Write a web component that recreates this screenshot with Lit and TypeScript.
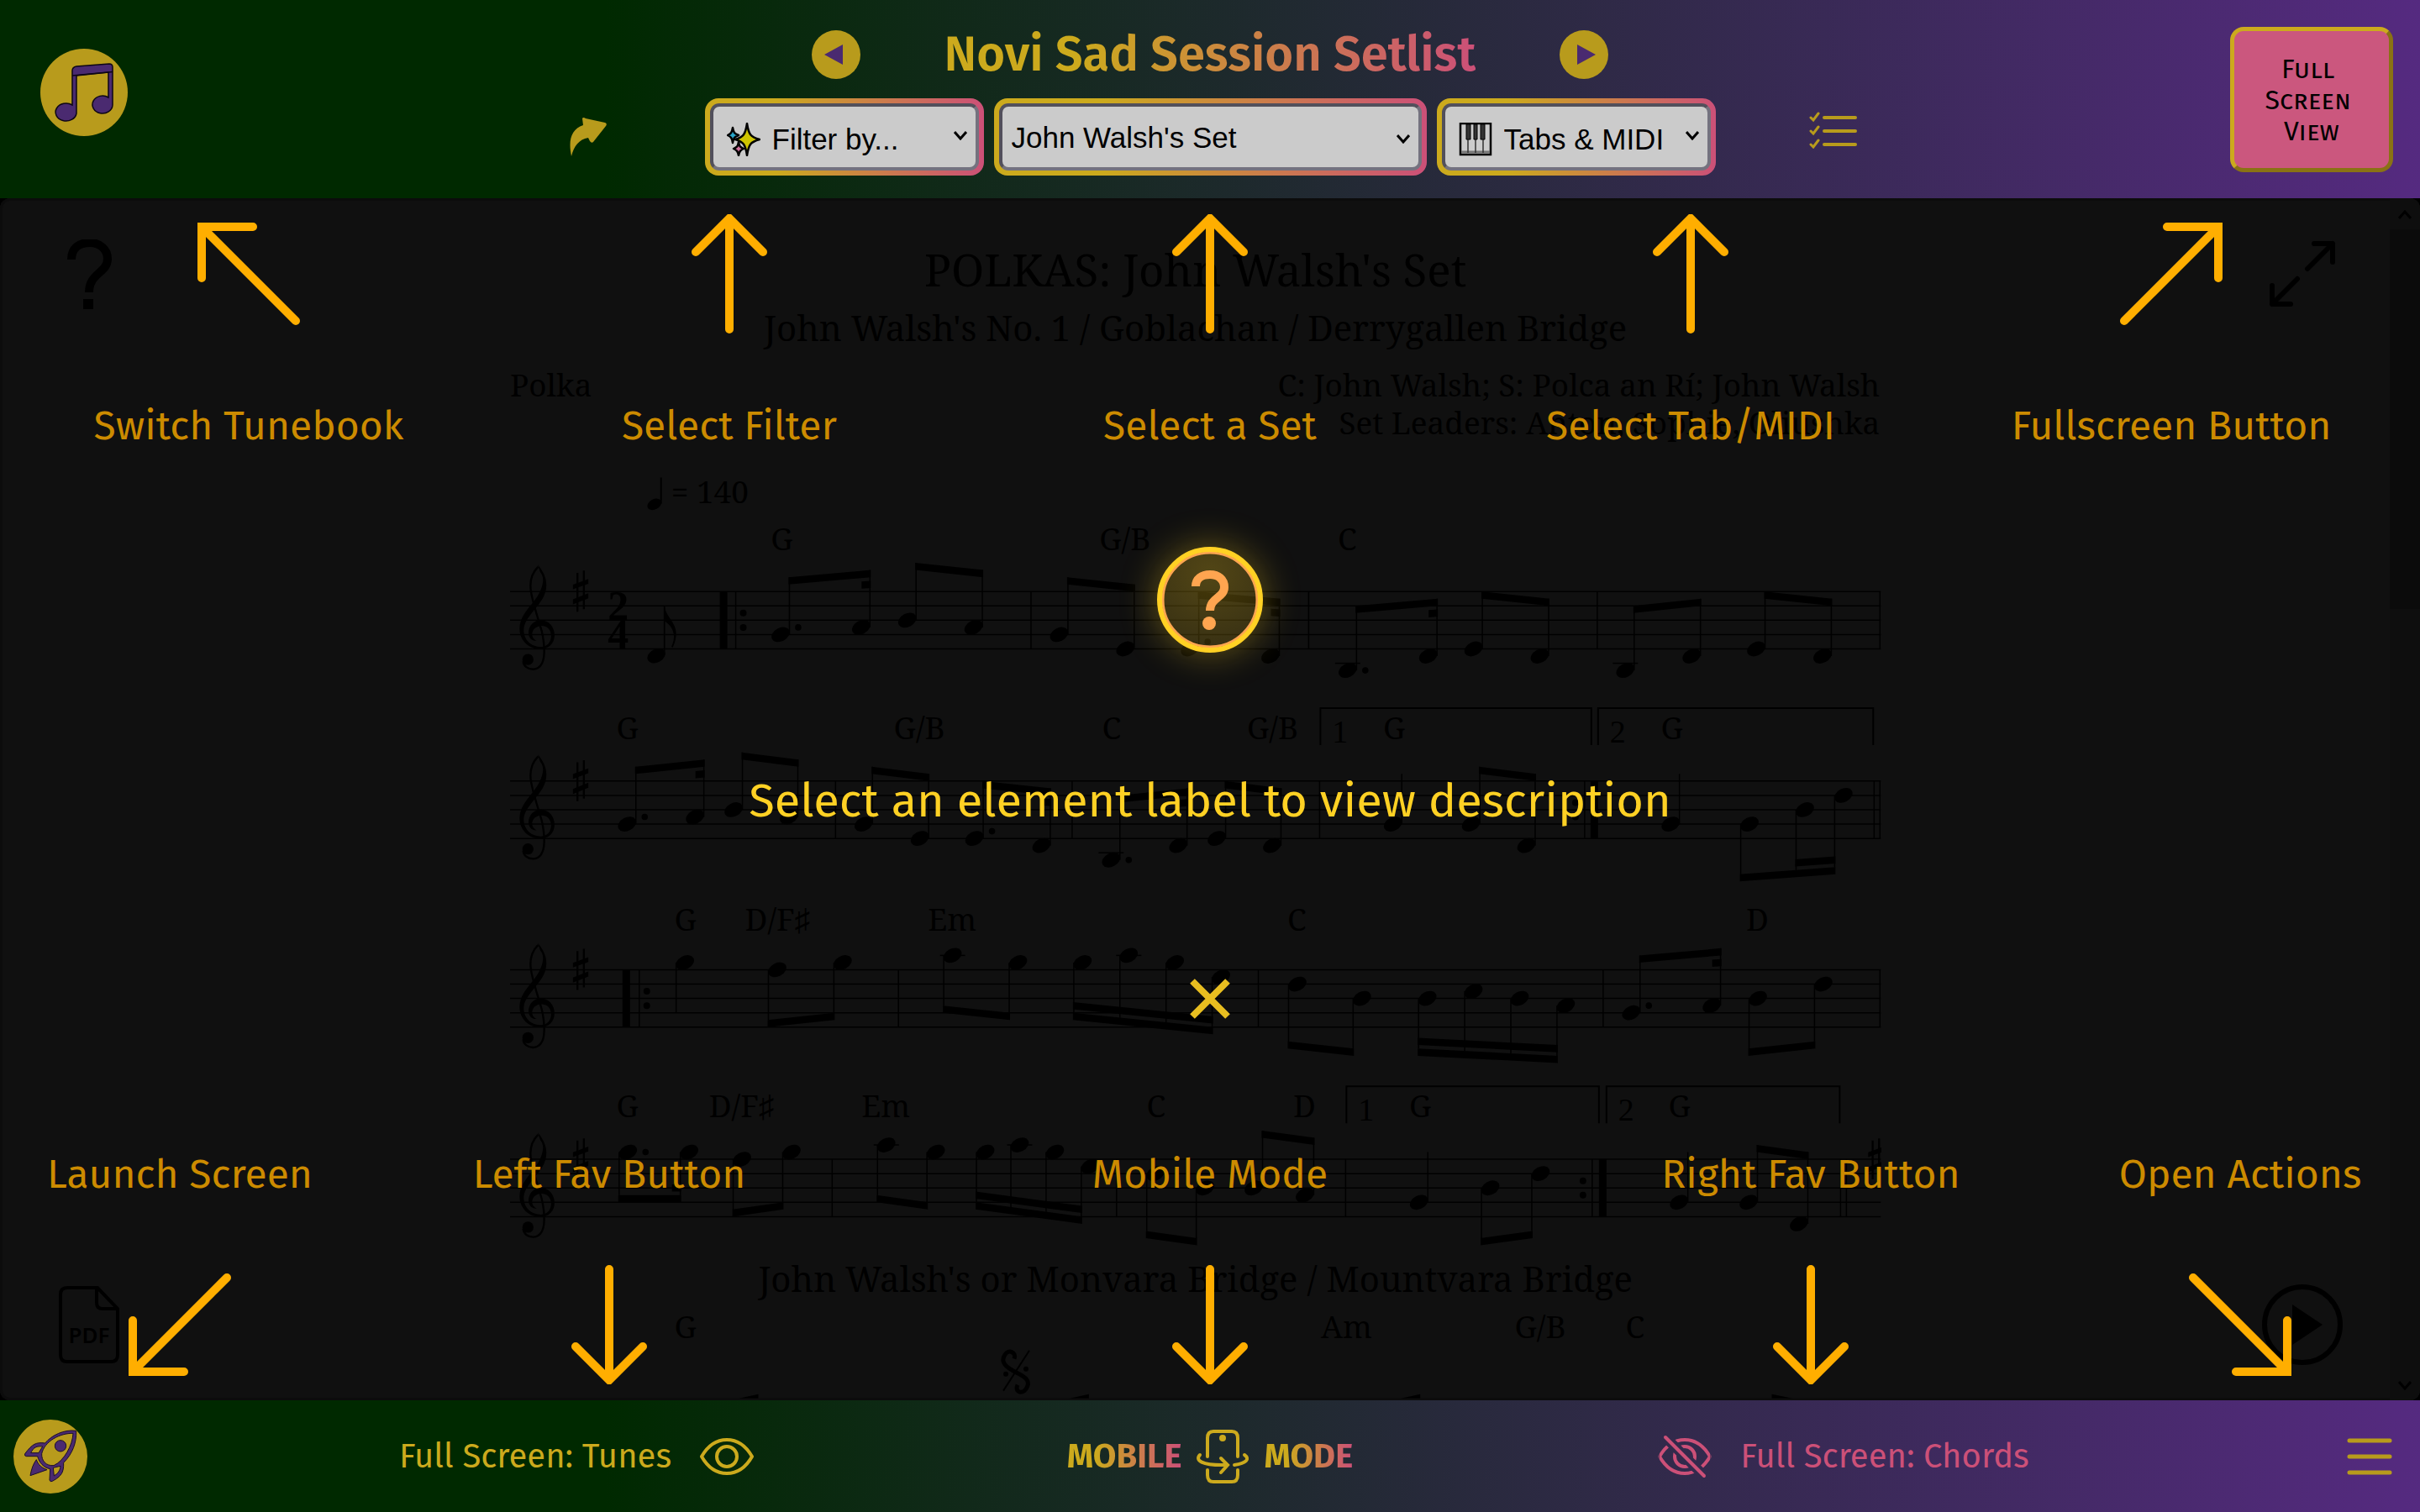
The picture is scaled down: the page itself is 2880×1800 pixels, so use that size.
import { LitElement, html, svg, css } from "lit";
import { customElement } from "lit/decorators.js";

/** Half the distance between two staff lines. */
const STEP = 8.55;

/** Notes are [stem x, half steps below the top staff line]. */
type Note = [number, number];

interface Group {
  notes: Note[];
  up?: boolean;
  /** Beam height at both ends, or stem end for a single note. */
  beam: [number, number];
  dot?: number;
  second?: [number, number];
  stub?: boolean;
}

interface Staff {
  y: number;
  groups: Group[];
  bars: number[];
  thick: number[];
  dots: number[];
  chords: [number, string][];
  chordY: number;
  endings: [number, number, string][];
}

const up = (notes: Note[], a: number, b: number, extra: Partial<Group> = {}): Group => ({ notes, up: true, beam: [a, b], ...extra });
const down = (notes: Note[], a: number, b: number, extra: Partial<Group> = {}): Group => ({ notes, beam: [a, b], ...extra });

const STAVES: Staff[] = [
  {
    y: 469,
    groups: [
      up([[333, 6], [429, 5]], -2, -3, { dot: 5, stub: true }),
      up([[484, 4], [563, 5]], -4, -3),
      up([[665, 6], [744, 8]], -2, -1),
      up([[821, 8], [917, 9]], 0, 1, { dot: 7, stub: true }),
      up([[1009, 11], [1105, 9]], 2, 1, { dot: 11, stub: true }),
      up([[1159, 8], [1238, 9]], 0, 1),
      up([[1340, 11], [1419, 9]], 2, 1),
      up([[1496, 8], [1575, 9]], 0, 1),
    ],
    bars: [269, 621, 952, 1296, 1633],
    thick: [255],
    dots: [278],
    chords: [[324, "G"], [733, "G/B"], [998, "C"]],
    chordY: 420,
    endings: [],
  },
  {
    y: 695,
    groups: [
      up([[150, 6], [231, 5]], -2, -3, { dot: 5, stub: true }),
      up([[277, 4], [343, 5]], -4, -3),
      up([[432, 6], [499, 8]], -2, -1),
      up([[564, 8], [644, 9]], 0, 1, { dot: 7, stub: true }),
      up([[727, 11], [807, 9]], 2, 1, { dot: 11, stub: true }),
      up([[853, 8], [919, 9]], 0, 1),
      up([[1063, 6]], -1, -1),
      up([[1156, 6], [1222, 9]], -2, -1),
      up([[1394, 6]], -1, -1),
      down([[1467, 6], [1533, 4], [1579, 2]], 13, 12, { second: [1, 2] }),
    ],
    bars: [388, 670, 965, 1281, 1626, 1633],
    thick: [1293],
    dots: [1270],
    chords: [[140, "G"], [488, "G/B"], [717, "C"], [909, "G/B"], [1054, "G"], [1385, "G"]],
    chordY: 645,
    endings: [[966, 1289, "1"], [1297, 1625, "2"]],
  },
  {
    y: 920,
    groups: [
      down([[198, -1]], 6, 6),
      down([[308, 0], [386, -1]], 7, 6),
      down([[517, -2], [595, -1]], 5, 6),
      down([[672, -1], [727, -2], [782, -1], [837, 1]], 6, 8, { second: [0, 3] }),
      down([[928, 2], [1005, 4]], 10, 11),
      down([[1083, 4], [1138, 3], [1193, 4], [1248, 5]], 11, 12, { second: [0, 3] }),
      up([[1347, 6], [1443, 5]], -2, -3, { dot: 5, stub: true }),
      down([[1477, 4], [1555, 2]], 11, 10),
    ],
    bars: [154, 463, 892, 1303, 1633],
    thick: [139],
    dots: [163],
    chords: [[209, "G"], [319, "D/F♯"], [527, "Em"], [938, "C"], [1487, "D"]],
    chordY: 873,
    endings: [],
  },
  {
    y: 1146,
    groups: [
      down([[130, -1], [203, -1]], 5, 5, { dot: -1, stub: true }),
      down([[266, 0], [325, -1]], 7, 6),
      down([[438, -2], [497, -1]], 5, 6),
      down([[556, -1], [597, -2], [639, -1], [681, 1]], 6, 8, { second: [0, 3] }),
      down([[759, 2], [818, 4]], 10, 11),
      up([[897, 4], [958, 5]], -4, -3),
      up([[1094, 6]], -1, -1),
      down([[1158, 4], [1218, 2]], 11, 10),
      up([[1404, 6]], -1, -1),
      up([[1487, 6], [1547, 9]], -2, -1),
    ],
    bars: [384, 723, 996, 1290, 1586, 1593],
    thick: [1303],
    dots: [1279],
    chords: [[140, "G"], [276, "D/F♯"], [448, "Em"], [770, "C"], [947, "D"], [1085, "G"], [1394, "G"]],
    chordY: 1096,
    endings: [[997, 1298, "1"], [1307, 1585, "2"]],
  },
];

const drawGroup = (g: Group, top: number) => {
  const at = (p: number) => top + p * STEP;
  const first = g.notes[0][0];
  const last = g.notes[g.notes.length - 1][0];
  const beamAt = (x: number) => (last === first ? at(g.beam[0]) : at(g.beam[0] + ((g.beam[1] - g.beam[0]) * (x - first)) / (last - first)));
  const side = g.up ? -10.5 : 10.5;
  const bar = (x1: number, x2: number, shift: number) =>
    svg`<path d="M${x1 - 1} ${beamAt(x1) + shift}L${x2 + 1} ${beamAt(x2) + shift}v${STEP}L${x1 - 1} ${beamAt(x1) + shift + STEP}z" />`;
  const inner = (g.up ? 1.5 : -1.5) * STEP;
  return svg`
    ${g.notes.map(([x, p]) => svg`
      <ellipse cx=${x + side} cy=${at(p)} rx="11.5" ry="8" transform="rotate(-28 ${x + side} ${at(p)})" />
      <path d="M${x} ${at(p)}V${beamAt(x)}" stroke="#000" stroke-width="1.5" />
      ${p > 9 ? svg`<path d="M${x + side - 15} ${at(10)}h30" stroke="#000" stroke-width="1.5" />` : null}
      ${p < -1 ? svg`<path d="M${x + side - 15} ${at(-2)}h30" stroke="#000" stroke-width="1.5" />` : null}`)}
    ${g.notes.length > 1 ? bar(first, last, 0) : null}
    ${g.second ? bar(g.notes[g.second[0]][0], g.notes[g.second[1]][0], inner) : null}
    ${g.stub ? bar(last - 9, last, inner) : null}
    ${g.dot !== undefined ? svg`<circle cx=${first + side + 21} cy=${at(g.dot)} r="3.8" />` : null}`;
};

const sharp = svg`
  <path d="M259 68V207M282 60V198" stroke="#000" stroke-width="7" />
  <path d="M243 110L298 90V107L243 127zM243 163L298 141V159L243 181z" />`;

const clef = svg`
  <path d="M117 40C135 60 148 85 148 112C148 150 125 175 103 203C80 232 66 250 67 277C69 310 95 333 128 333C152 333 165 315 165 292C163 268 148 257 128 258C110 259 97 272 97 288C97 298 103 307 113 311C95 313 84 298 84 283C84 258 103 237 127 237C157 237 177 262 177 290C177 322 155 341 125 341C85 341 52 310 52 268C52 232 75 205 97 178C118 152 134 125 136 95C136 82 132 72 126 66Z" />
  <path d="M118 47C100 65 91 88 91 115C91 145 102 175 112 212L131 275C138 305 141 330 140 355C139 395 122 413 100 413C82 413 66 402 65 384" fill="none" stroke="#000" stroke-width="7" />
  <circle cx="82" cy="378" r="20" />`;

const drawStaff = (s: Staff) => svg`
  <g stroke="#000" stroke-width="1.5">
    ${[0, 2, 4, 6, 8].map((p) => svg`<path d="M0 ${s.y + p * STEP}H1634" />`)}
    ${s.bars.map((x) => svg`<path d="M${x} ${s.y}v${8 * STEP}" />`)}
  </g>
  ${s.thick.map((x) => svg`<rect x=${x - 5} y=${s.y} width="9" height=${8 * STEP} />`)}
  ${s.dots.map((x) => svg`<circle cx=${x} cy=${s.y + 3 * STEP} r="4" /><circle cx=${x} cy=${s.y + 5 * STEP} r="4" />`)}
  <g transform="translate(-6 ${s.y - 45}) scale(.3333)">${clef}${sharp}</g>
  ${s.groups.map((g) => drawGroup(g, s.y))}
  ${s.chords.map(([x, name]) => svg`<text class="chord" x=${x} y=${s.chordY}>${name}</text>`)}
  ${s.endings.map(([x1, x2, n]) => svg`
    <path d="M${x1} ${s.y - 43}v-44H${x2}v44" fill="none" stroke="#000" stroke-width="2" />
    <text class="ending" x=${x1 + 14} y=${s.y - 46}>${n}</text>`)}`;

@customElement("tune-score")
export class TuneScore extends LitElement {
  static styles = css`
    :host { display: block; }
    .sheet { display: block; width: 100%; height: auto; }
    text { font-family: "Noto Serif", "Droid Serif", "Liberation Serif", serif; fill: #000; }
    .title { font-size: 53px; text-anchor: middle; }
    .subtitle { font-size: 42px; text-anchor: middle; }
    .chord { font-size: 37px; text-anchor: middle; }
    .info { font-size: 37px; }
    .end { text-anchor: end; }
    .ending { font-family: "Liberation Serif", serif; font-size: 38px; }
    .meter { font-family: "Liberation Serif", serif; font-size: 50px; font-weight: 700; text-anchor: middle; }
  `;

  render() {
    return html`
      <svg class="sheet" viewBox="0 0 1634 1431" role="img" aria-label="John Walsh's Set">
        <text class="title" x="817" y="105">POLKAS: John Walsh's Set</text>
        <text class="subtitle" x="817" y="170">John Walsh's No. 1 / Goblachan / Derrygallen Bridge</text>
        <text class="info" x="0" y="236">Polka</text>
        <text class="info end" x="1633" y="236">C: John Walsh; S: Polca an Rí; John Walsh</text>
        <text class="info end" x="1633" y="281">Set Leaders: Anton, Sophie, Oliushka</text>
        <ellipse cx="172" cy="365" rx="9" ry="6" transform="rotate(-28 172 365)" />
        <path d="M180 364V333" stroke="#000" stroke-width="2" />
        <text class="info" x="192" y="364">= 140</text>
        ${STAVES.map(drawStaff)}
        <text class="meter" x="129" y="503">2</text>
        <text class="meter" x="129" y="537">4</text>
        <g transform="translate(-6 424) scale(.3333)">
          <ellipse cx="541" cy="365" rx="34" ry="24" transform="rotate(-28 541 365)" />
          <path d="M570 360V187" stroke="#000" stroke-width="5" />
          <path d="M570 187C575 225 612 245 612 285C612 305 606 322 600 335L595 333C603 315 606 300 603 285C598 262 585 250 570 240Z" />
        </g>
        <g transform="translate(1538 1101) scale(.3333)">${sharp}</g>
        <text class="subtitle" x="817" y="1304">John Walsh's or Monvara Bridge / Mountvara Bridge</text>
        <text class="chord" x="209" y="1359">G</text>
        <text class="chord" x="997" y="1359">Am</text>
        <text class="chord" x="1228" y="1359">G/B</text>
        <text class="chord" x="1341" y="1359">C</text>
        <path d="M588 1422L619 1374" stroke="#000" stroke-width="2" />
        <path d="M601 1384C604 1376 594 1372 590 1379C584 1388 591 1394 603 1400C616 1406 621 1411 615 1420C610 1427 601 1423 605 1415" fill="none" stroke="#000" stroke-width="5" />
        <circle cx="591" cy="1402" r="3" />
        <circle cx="615" cy="1396" r="3" />
        <path d="M273 1431l23-5v5zM667 1431l23-5v5zM1062 1431l23-5v5zM1504 1426l25 5h-25z" />
      </svg>
    `;
  }
}

type Way = "up" | "up-left" | "up-right" | "down" | "down-left" | "down-right";

const ARROWS: Record<Way, string> = {
  up: "M71 137V7M31 45L71 5L111 45",
  down: "M71 5V135M31 97L71 137L111 97",
  "up-left": "M127 127L15 15M76 15H15V76",
  "up-right": "M15 127L127 15M66 15H127V76",
  "down-left": "M127 15L15 127M76 127H15V66",
  "down-right": "M15 15L127 127M66 127H127V66",
};

const TOP_HINTS: [string, Way][] = [
  ["Switch Tunebook", "up-left"],
  ["Select Filter", "up"],
  ["Select a Set", "up"],
  ["Select Tab/MIDI", "up"],
  ["Fullscreen Button", "up-right"],
];

const BOTTOM_HINTS: [string, Way][] = [
  ["Launch Screen", "down-left"],
  ["Left Fav Button", "down"],
  ["Mobile Mode", "down"],
  ["Right Fav Button", "down"],
  ["Open Actions", "down-right"],
];

@customElement("help-overlay")
export class HelpOverlay extends LitElement {
  static styles = css`
    :host { display: flex; flex-direction: column; box-sizing: border-box; padding: 19px 0; }
    button { font: inherit; color: inherit; background: none; border: 0; padding: 0; margin: 0; cursor: pointer; }
    .hints { display: grid; }
    .hints-top { grid-template-columns: repeat(5, 1fr); padding: 0 10px; }
    .hints-bottom { grid-template-columns: 428fr 594fr 836fr 594fr 428fr; margin-top: auto; }
    .hint { display: flex; flex-direction: column; align-items: center; gap: 82px; }
    .hints-bottom .hint { flex-direction: column-reverse; gap: 80px; }
    .arrow { width: 142px; height: 142px; fill: none; stroke: #ffae00; stroke-width: 10; stroke-linecap: round; stroke-linejoin: round; }
    .label { font-size: 48px; line-height: 56px; color: #cc8b00; white-space: nowrap; }
    .center { display: flex; flex-direction: column; align-items: center; margin-top: 116px; }
    .badge { display: flex; width: 126px; height: 126px; border-radius: 50%; box-shadow: 0 0 44px rgba(255, 210, 36, .38); background: radial-gradient(circle at 50% 25%, rgba(255, 210, 36, .28), rgba(255, 210, 36, .14)); }
    .badge svg { width: 126px; height: 126px; }
    .prompt { margin: 145px 0 0; font-size: 56px; line-height: 64px; color: #ffd124; }
    .close { display: flex; margin-top: 178px; }
    .close svg { width: 50px; height: 50px; }
  `;

  private hint([text, way]: [string, Way]) {
    return html`<div class="hint">
      <svg class="arrow" viewBox="0 0 142 142" aria-hidden="true"><path d=${ARROWS[way]} stroke-linejoin="miter" /></svg>
      <button class="label">${text}</button>
    </div>`;
  }

  render() {
    return html`
      <div class="hints hints-top">${TOP_HINTS.map((h) => this.hint(h))}</div>
      <div class="center">
        <button class="badge" aria-label="Help">
          <svg viewBox="0 0 126 126">
            <circle cx="63" cy="63" r="56" fill="none" stroke="#ffa550" stroke-width="3" />
            <circle cx="63" cy="63" r="60" fill="none" stroke="#ffd124" stroke-width="6" />
            <path d="M46 47C46 38 53 33 63 33C73 33 80 39 80 48C80 61 63 60 63 76" fill="none" stroke="#ffa550" stroke-width="10" />
            <circle cx="62" cy="91" r="8" fill="#ffa550" />
          </svg>
        </button>
        <p class="prompt">Select an element label to view description</p>
        <button class="close" aria-label="Close">
          <svg viewBox="0 0 50 50"><path d="M4 4L46 46M46 4L4 46" stroke="#e8be20" stroke-width="8" /></svg>
        </button>
      </div>
      <div class="hints hints-bottom">${BOTTOM_HINTS.map((h) => this.hint(h))}</div>
    `;
  }
}

const sparkles = html`<svg class="emoji" viewBox="0 0 40 40" aria-hidden="true">
  <g stroke="#000" stroke-width="2.5" stroke-linejoin="round">
    <path d="M7 6C8 12 9 13 14 15C9 17 8 18 7 24C6 18 5 17 1 15C5 13 6 12 7 6Z" fill="#2aa5c8" />
    <path d="M14 23C15 29 16 29 20 31C16 33 15 34 14 39C13 34 12 33 8 31C12 29 13 29 14 23Z" fill="#cf6f9c" />
    <path d="M24 1C26 14 28 17 39 20C28 23 26 26 24 39C22 26 20 23 10 20C20 17 22 14 24 1Z" fill="#cfc500" />
  </g>
</svg>`;

const piano = html`<svg class="emoji" viewBox="0 0 40 40" aria-hidden="true">
  <rect x="2" y="1" width="36" height="37" fill="#ccc" stroke="#000" stroke-width="2.5" />
  <path d="M3 35H37" stroke="#777" stroke-width="3" />
  <path d="M11 20V36M20 20V36M29 20V36" stroke="#333" stroke-width="1.5" />
  <path d="M9 2H14V20H9zM18 2H22V20H18zM26 2H31V20H26z" fill="#333" stroke="#000" />
</svg>`;

const chevron = html`<svg class="chevron" viewBox="0 0 16 11" aria-hidden="true"><path d="M1 1L8 9L15 1" fill="none" stroke="#000" stroke-width="3" /></svg>`;

@customElement("app-root")
export class AppRoot extends LitElement {
  static styles = css`
    :host {
      display: flex; flex-direction: column; height: 100vh; min-width: 0; overflow: hidden; background: #000;
      font-family: "Trebuchet MS", "Fira Sans", "Noto Sans", sans-serif;
      --bar: linear-gradient(to right, #002900 25%, #552a80);
      --blend: linear-gradient(to right, #ccaa1d 25%, #cc5078);
      --yellow: #ccaa1d;
      --pink: #cc5078;
    }
    button, a { font: inherit; color: inherit; background: none; border: 0; padding: 0; margin: 0; cursor: pointer; display: flex; text-decoration: none; }
    svg { display: block; }
    .header { display: grid; grid-template-columns: 1fr auto 1fr; box-sizing: border-box; height: 236px; background: var(--bar); padding: 0 32px 0 48px; flex: none; }
    .logo { margin-top: 58px; align-self: start; justify-self: start; }
    .logo svg { width: 104px; height: 104px; }
    .middle { display: flex; flex-direction: column; align-items: center; gap: 20px; padding-top: 33px; margin-left: -16px; }
    .title-row { display: flex; align-items: center; gap: 100px; }
    .title { margin: 0; font-size: 58px; line-height: 64px; font-weight: 600; color: transparent; background: var(--blend); -webkit-background-clip: text; background-clip: text; white-space: nowrap; }
    .step svg { width: 58px; height: 58px; }
    .controls { display: flex; align-items: center; gap: 110px; }
    .tool { width: 58px; justify-content: center; }
    .share svg { width: 44px; height: 46px; }
    .list { align-self: flex-start; padding-top: 16px; }
    .list svg { width: 58px; height: 44px; }
    .selects { display: flex; gap: 12px; }
    .field { position: relative; display: grid; padding: 6px; border-radius: 16px; background: var(--blend); width: 320px; }
    .field-wide { width: 503px; }
    .select { appearance: none; box-sizing: border-box; width: 100%; height: 80px; border: 4px solid; border-color: #52505c #74727f #74727f #52505c; border-radius: 11px; background: #cbcbcb; color: #000; font: 35px "Liberation Sans", Arial, sans-serif; padding: 4px 40px 0 70px; }
    .field-wide .select { padding: 0 40px 0 11px; }
    .emoji { position: absolute; left: 26px; top: 29px; width: 40px; height: 40px; pointer-events: none; }
    .chevron { position: absolute; right: 20px; top: 39px; width: 16px; height: 11px; pointer-events: none; }
    .field-wide .chevron { top: 43px; }
    .full { box-sizing: border-box; width: 194px; height: 173px; margin-top: 32px; padding-top: 2px; justify-self: end; align-items: center; justify-content: center; border: 5px solid; border-color: #ccaa1d #8a7214 #8a7214 #ccaa1d; border-radius: 16px; background: #cb577e; color: #000; font-size: 32px; line-height: 37px; font-variant: small-caps; text-align: center; white-space: pre; }

    .main { flex: 1; min-height: 0; position: relative; display: grid; grid-template-rows: minmax(0, 1fr); background: #101010; border-radius: 12px; box-shadow: inset 0 0 0 3px #0c0c0c; overflow: hidden; }
    .viewer { grid-area: 1 / 1; display: flex; overflow: hidden; }
    .sheet { flex: 1; display: flex; justify-content: center; min-width: 0; padding-left: 2px; }
    .sheet tune-score { width: 57.4%; }
    .scroll { width: 36px; display: flex; flex-direction: column; justify-content: space-between; align-items: center; padding: 14px 0 12px; box-sizing: border-box; background: #0e0e0e; }
    .scroll svg { width: 16px; height: 11px; }
    .thumb { width: 36px; height: 452px; margin: 12px 0 auto; background: #0b0b0b; }
    .overlay { grid-area: 1 / 1; z-index: 2; }
    .corner { position: absolute; z-index: 1; }
    .corner-help { left: 80px; top: 49px; }
    .corner-expand { right: 100px; top: 50px; }
    .corner-pdf { left: 70px; bottom: 44px; }
    .corner-play { right: 92px; bottom: 42px; }
    .pdf-text { font: 600 26px "Noto Sans", sans-serif; }

    .footer { display: grid; grid-template-columns: 309fr 754fr 754fr 754fr 309fr; align-items: center; height: 133px; flex: none; background: var(--bar); font-size: 40px; line-height: 48px; }
    .rocket { padding-left: 16px; }
    .rocket svg { width: 88px; height: 88px; }
    .fav { justify-self: center; align-items: center; gap: 34px; color: var(--yellow); white-space: nowrap; }
    .fav-off { color: var(--pink); }
    .fav svg { width: 64px; height: 52px; }
    .mobile { justify-self: center; align-items: center; gap: 17px; font-weight: 700; }
    .mobile svg { width: 64px; height: 64px; }
    .blend { color: transparent; background: var(--blend); -webkit-background-clip: text; background-clip: text; }
    .menu { justify-self: end; padding-right: 33px; }
    .menu svg { width: 54px; height: 46px; }
  `;

  render() {
    return html`
      <header class="header">
        <button class="logo" aria-label="Switch Tunebook">
          <svg viewBox="0 0 104 104">
            <circle cx="52" cy="52" r="52" fill="#b89b1c" />
            <path d="M38 26Q38 22 43 21L82 18Q86 18 86 22V67A12 10.5 0 1 1 81 58V28L43 32V77A12.500 10.500 0 1 1 38 67Z" fill="#4a2a70" stroke="#0d0616" stroke-width="1.500" />
            <path d="M38 32L86 27.500" stroke="#0d0616" stroke-width="1.500" />
          </svg>
        </button>
        <div class="middle">
          <div class="title-row">
            <button class="step" aria-label="Previous">
              <svg viewBox="0 0 58 58"><circle cx="29" cy="29" r="29" fill="#b89b1c" /><path d="M15 29L37 17V41Z" fill="#4a2a70" /></svg>
            </button>
            <h1 class="title">Novi Sad Session Setlist</h1>
            <button class="step" aria-label="Next">
              <svg viewBox="0 0 58 58"><circle cx="29" cy="29" r="29" fill="#b89b1c" /><path d="M43 29L21 17V41Z" fill="#4a2a70" /></svg>
            </button>
          </div>
          <div class="controls">
            <button class="tool share" aria-label="Share">
              <svg viewBox="0 0 44 46"><path d="M15 1Q16 -1 19 1L42 6Q45 7 43 10L28 29Q26 31 24 28L22 24C11 26 5 34 2 46C-2 26 2 14 16 9Z" fill="#b89b1c" /></svg>
            </button>
            <div class="selects">
              <div class="field">
                <select class="select" aria-label="Filter"><option>Filter by...</option></select>
                ${sparkles}${chevron}
              </div>
              <div class="field field-wide">
                <select class="select" aria-label="Set"><option>John Walsh's Set</option></select>
                ${chevron}
              </div>
              <div class="field">
                <select class="select" aria-label="Display"><option>Tabs &amp; MIDI</option></select>
                ${piano}${chevron}
              </div>
            </div>
            <button class="tool list" aria-label="Setlist">
              <svg viewBox="0 0 58 44" fill="none" stroke="#b89b1c" stroke-linecap="round">
                <path d="M19 7H56M19 23H56M19 39H56" stroke-width="4" />
                <path d="M3 7L6 10L12 2M3 23L6 26L12 18M3 39L6 42L12 34" stroke-width="3" />
              </svg>
            </button>
          </div>
        </div>
        <button class="full">Full 
Screen 
View</button>
      </header>

      <main class="main">
        <div class="viewer">
          <div class="sheet"><tune-score></tune-score></div>
          <div class="scroll" aria-hidden="true">
            <svg viewBox="0 0 16 11"><path d="M1 10L8 2L15 10" fill="none" stroke="#000" stroke-width="3" /></svg>
            <div class="thumb"></div>
            <svg viewBox="0 0 16 11"><path d="M1 1L8 9L15 1" fill="none" stroke="#000" stroke-width="3" /></svg>
          </div>
        </div>
        <button class="corner corner-help" aria-label="Help">
          <svg width="54" height="84" viewBox="0 0 54 84"><path d="M5 24C5 10 14 4 27 4C39 4 48 12 48 23C48 40 26 40 26 63" fill="none" stroke="#000" stroke-width="10" /><rect x="19" y="71" width="12" height="12" /></svg>
        </button>
        <button class="corner corner-expand" aria-label="Expand">
          <svg width="80" height="80" viewBox="0 0 80 80"><path d="M46 34L76 4M54 4H76V26M34 46L4 76M4 54V76H26" fill="none" stroke="#000" stroke-width="6" stroke-linecap="round" stroke-linejoin="round" /></svg>
        </button>
        <button class="corner corner-pdf" aria-label="PDF">
          <svg width="72" height="92" viewBox="0 0 72 92"><path d="M10 2H46L70 27V82Q70 90 62 90H10Q2 90 2 82V10Q2 2 10 2ZM45 3V20Q45 27 52 27H70" fill="none" stroke="#000" stroke-width="4" /><text class="pdf-text" x="36" y="68" text-anchor="middle">PDF</text></svg>
        </button>
        <button class="corner corner-play" aria-label="Play">
          <svg width="96" height="96" viewBox="0 0 96 96"><circle cx="48" cy="48" r="45" fill="none" stroke="#000" stroke-width="6" /><path d="M36 24V72L72 48Z" /></svg>
        </button>
        <help-overlay class="overlay"></help-overlay>
      </main>

      <footer class="footer">
        <button class="rocket" aria-label="Launch Screen">
          <svg viewBox="24 18 264 264">
            <circle cx="156" cy="150" r="132" fill="#b89b1c" />
            <g fill="#4a2a70" stroke="#1a0d2a" stroke-width="3" stroke-linejoin="round">
              <path fill-rule="evenodd" d="M248 58C205 52 160 74 137 102C105 98 92 104 65 140Q62 148 70 149L110 149C116 172 132 190 155 194L153 234Q155 242 163 238C195 220 204 208 203 172C235 140 250 100 248 58ZM237 67C235 110 205 165 168 182C140 184 124 165 125 140C135 95 190 66 237 67ZM128 114L114 137H86C96 116 108 112 128 114ZM192 184L166 190L169 219C184 208 190 202 192 184Z" />
              <circle cx="192" cy="112" r="20" />
              <path d="M106 161C95 175 88 195 84 218L144 197C128 192 112 180 106 161Z" />
            </g>
          </svg>
        </button>
        <button class="fav">
          <span>Full Screen: Tunes</span>
          <svg viewBox="0 0 64 52" fill="none" stroke="currentColor" stroke-width="4"><path d="M2 26C10 12 20 6 32 6S54 12 62 26C54 40 44 46 32 46S10 40 2 26Z" stroke-linejoin="round" /><circle cx="32" cy="26" r="12" /></svg>
        </button>
        <button class="mobile">
          <span class="blend">MOBILE</span>
          <svg viewBox="0 0 64 64" fill="none" stroke="#ccaa1d" stroke-width="4" stroke-linecap="round">
            <path d="M14 32V10Q14 2 21 2H43Q50 2 50 10V32M14 48V54Q14 62 21 62H43Q50 62 50 54V48" />
            <circle cx="32" cy="10" r="2" />
            <path d="M5 30C-1 36 6 43 37 42M30 34L38 42L30 51M58 30C65 35 60 40 46 42" />
          </svg>
          <span class="blend">MODE</span>
        </button>
        <button class="fav fav-off">
          <svg viewBox="0 0 64 52" fill="none" stroke="currentColor" stroke-width="4">
            <mask id="cut"><rect width="64" height="52" fill="#fff" /><path d="M4 -2L62 56" stroke="#000" stroke-width="12" /></mask>
            <g mask="url(#cut)"><path d="M2 26C10 12 20 6 32 6S54 12 62 26C54 40 44 46 32 46S10 40 2 26Z" stroke-linejoin="round" /><circle cx="32" cy="26" r="12" /></g>
            <path d="M9 3L55 49" stroke-linecap="round" />
          </svg>
          <span>Full Screen: Chords</span>
        </button>
        <button class="menu" aria-label="Open Actions">
          <svg viewBox="0 0 54 46"><path d="M3 4H51M3 23H51M3 42H51" stroke="#b89b1c" stroke-width="5" stroke-linecap="round" /></svg>
        </button>
      </footer>
    `;
  }
}
